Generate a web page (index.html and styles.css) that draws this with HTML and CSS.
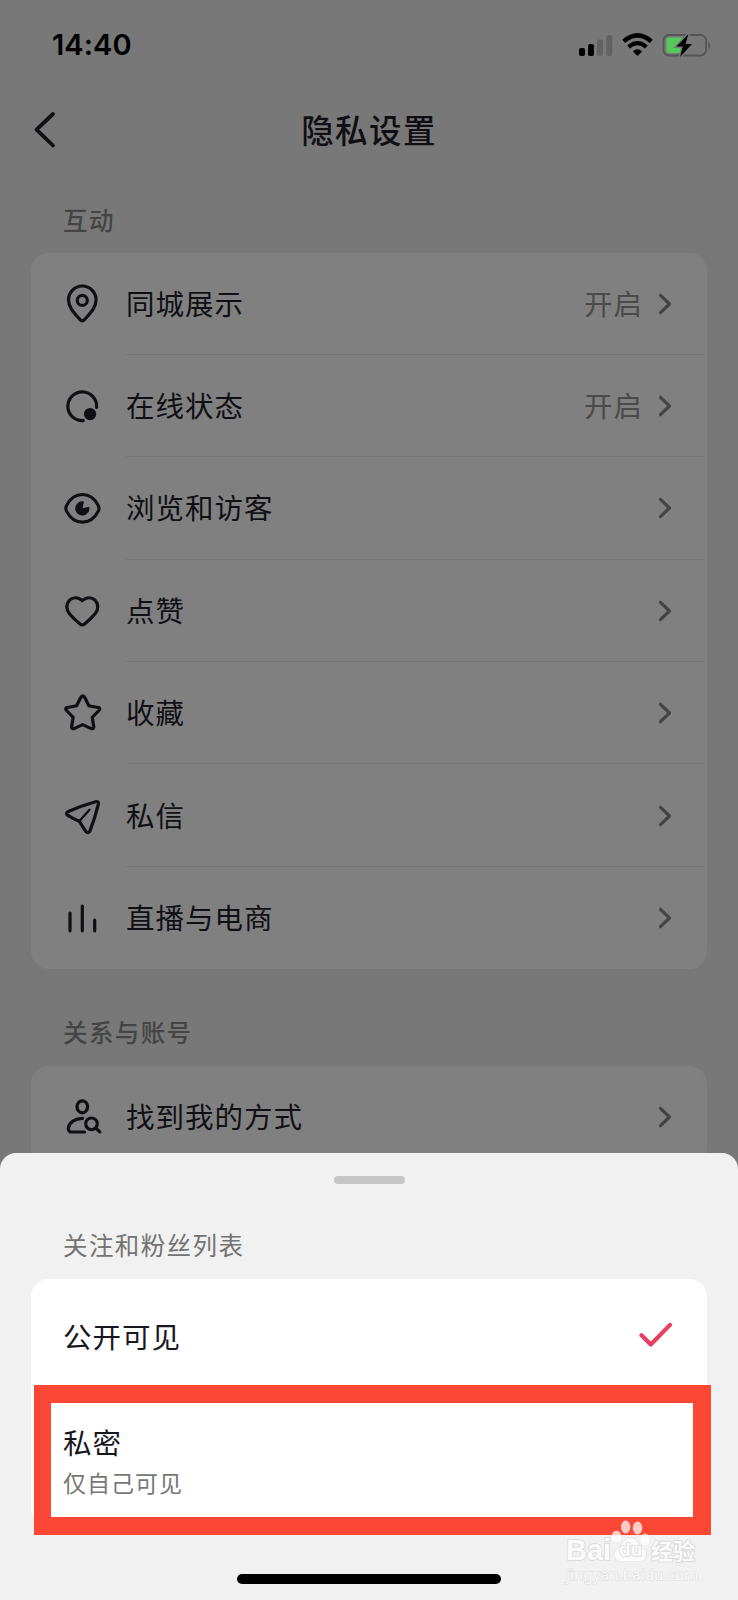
FILE: index.html
```html
<!DOCTYPE html>
<html lang="zh-CN">
<head>
<meta charset="utf-8">
<title>隐私设置</title>
<link rel="stylesheet" href="styles.css">
</head>
<body>
<div class="screen">
  <header class="status">
    <span class="time">14:40</span>
    <svg class="status-icons" width="132" height="26" viewBox="0 0 132 26">
      <rect x="0" y="15" width="6" height="8" rx="2"/>
      <rect x="9" y="11" width="6" height="12" rx="2"/>
      <rect x="18" y="6.500" width="6" height="16.500" rx="2" fill="#626262"/>
      <rect x="27.300" y="2" width="6" height="21" rx="2" fill="#626262"/>
      <path d="M44.700 8.300Q58.500-3.600 72.300 8.300" fill="none" stroke="#000" stroke-width="4.400"/>
      <path d="M49.600 14Q58.500 6.300 67.400 14" fill="none" stroke="#000" stroke-width="4"/>
      <path d="M54 18.400Q58.500 14.300 63 18.400L58.500 22.900Z"/>
      <rect x="84.500" y="2" width="42.500" height="20.500" rx="5.500" fill="none" stroke="#555" stroke-width="1.800"/>
      <path d="M129.300 8.500q4 4 0 8z" fill="#555"/>
      <rect x="87.500" y="4.500" width="16" height="15.500" rx="3" fill="#54c95c"/>
      <path d="M109.500 1L97.500 13.600h6.300L101 24l12-13h-6.500z" stroke="#787878" stroke-width="3" paint-order="stroke"/>
    </svg>
  </header>

  <nav class="navbar">
    <svg class="back" width="24" height="40" viewBox="0 0 24 40"><path d="M20 4L3.500 19.700 20 35.500"/></svg>
    <h1>隐私设置</h1>
  </nav>

  <h2 class="section-title first">互动</h2>
  <ul class="card">
    <li class="row">
      <svg class="icon" viewBox="0 0 40 40"><path d="M20.300 36.900c-1 0-1.700-.7-2.400-1.500C12.500 29.200 6.500 23.500 6.500 15.800a13.800 13.800 0 0 1 27.600 0c0 7.700-6 13.400-11.400 19.600-.7.800-1.400 1.500-2.400 1.500z"/><circle cx="20.300" cy="16.400" r="5"/></svg>
      <span class="label">同城展示</span><span class="value">开启</span>
      <svg class="chevron" viewBox="0 0 14 22"><path d="M2.500 2.300l9 8.700-9 8.700"/></svg>
    </li>
    <li class="row">
      <svg class="icon" viewBox="0 0 40 40"><path d="M34.600 21.300A14.400 14.400 0 1 0 21.300 34.600"/><circle class="solid" cx="28.100" cy="28.100" r="6.200"/></svg>
      <span class="label">在线状态</span><span class="value">开启</span>
      <svg class="chevron" viewBox="0 0 14 22"><path d="M2.500 2.300l9 8.700-9 8.700"/></svg>
    </li>
    <li class="row">
      <svg class="icon" viewBox="0 0 40 40"><path d="M4.500 17.600C8 10.700 14 6.500 20.400 6.500s12.400 4.200 15.900 11.100c.9 1.800.9 3.700 0 5.500-3.500 6.900-9.500 11.100-15.900 11.100S8 30 4.500 23.100c-.9-1.800-.9-3.700 0-5.500z"/><path class="solid" d="M27.200 18.700A7.100 7.100 0 1 1 22 13.500L20.700 19q-.2 1.200 1 1z"/></svg>
      <span class="label">浏览和访客</span>
      <svg class="chevron" viewBox="0 0 14 22"><path d="M2.500 2.300l9 8.700-9 8.700"/></svg>
    </li>
    <li class="row">
      <svg class="icon" viewBox="0 0 40 40"><path d="M20.300 9.700C16.500 5.800 10.800 5.900 7.600 9.200c-3.500 3.700-3.700 9.300-.3 13.200C10.300 26.100 14.200 29.700 18.100 33c1.700 1.400 2.800 1.400 4.500 0 3.900-3.300 7.700-6.900 10.700-10.600 3.400-3.900 3.200-9.500-.3-13.200-3.200-3.300-8.900-3.400-12.700.5z"/></svg>
      <span class="label">点赞</span>
      <svg class="chevron" viewBox="0 0 14 22"><path d="M2.500 2.300l9 8.700-9 8.700"/></svg>
    </li>
    <li class="row">
      <svg class="icon" viewBox="0 0 40 40"><path d="M19.200 3.900q1.700-2 3.300 0Q24.600 8 26.900 12.700q5 1.200 9.600 1.800 2 .8.900 2.500-3.500 3.700-7.100 7.300.6 5 1.500 9.600-.3 2.100-2.400 1.700-4.300-1.900-8.700-4-4.400 2.100-8.700 4-2.100.4-2.400-1.700.9-4.600 1.500-9.600Q7.500 20.700 4.200 17q-1.200-1.700.8-2.500 4.600-.6 9.600-1.800Q16.900 8 19.200 3.900z"/></svg>
      <span class="label">收藏</span>
      <svg class="chevron" viewBox="0 0 14 22"><path d="M2.500 2.300l9 8.700-9 8.700"/></svg>
    </li>
    <li class="row">
      <svg class="icon" viewBox="0 0 40 40"><path d="M5.800 15.800Q19 9.700 33.500 5.700q3.300-.9 2.900 2.300Q33 22 28 34.900q-2 3.300-4.300.4Q20.500 30.500 17.200 25.200 11 22.800 5.400 19.200q-1.900-1.700.4-3.400z"/><path d="M17.200 25.200L27.500 13.800" stroke-width="2.400"/></svg>
      <span class="label">私信</span>
      <svg class="chevron" viewBox="0 0 14 22"><path d="M2.500 2.300l9 8.700-9 8.700"/></svg>
    </li>
    <li class="row">
      <svg class="icon" viewBox="0 0 40 40"><path d="M8 15.200v17.600M20.300 8.200v24.600M32.700 22v10.800"/></svg>
      <span class="label">直播与电商</span>
      <svg class="chevron" viewBox="0 0 14 22"><path d="M2.500 2.300l9 8.700-9 8.700"/></svg>
    </li>
  </ul>

  <h2 class="section-title">关系与账号</h2>
  <ul class="card">
    <li class="row">
      <svg class="icon" viewBox="0 0 40 40"><ellipse cx="20.300" cy="9.800" rx="5.300" ry="6"/><path d="M20.500 21.400C13 21.600 7 25.300 6.400 31.300c-.2 2.400.8 3.700 3 3.700H22.500"/><circle cx="29.500" cy="26.800" r="5.800"/><path d="M33.800 31l4 3.800"/></svg>
      <span class="label">找到我的方式</span>
      <svg class="chevron" viewBox="0 0 14 22"><path d="M2.500 2.300l9 8.700-9 8.700"/></svg>
    </li>
  </ul>

  <section class="sheet">
    <div class="handle"></div>
    <h2 class="sheet-title">关注和粉丝列表</h2>
    <div class="options">
      <div class="option">
        <span class="label">公开可见</span>
        <svg class="check" width="34" height="26" viewBox="0 0 34 26"><path d="M2.500 13.300l9.300 9.200L31 2.900"/></svg>
      </div>
      <div class="option private">
        <span class="label">私密</span>
        <span class="hint">仅自己可见</span>
      </div>
    </div>
    <div class="home-bar"></div>
  </section>

  <div class="highlight"></div>

  <div class="watermark">
    <div class="brand">
      <span class="bai">Bai</span>
      <span class="paw">
        <svg width="40" height="44" viewBox="0 0 40 44">
          <g fill="#fff" fill-opacity=".72"><ellipse cx="6.500" cy="17.500" rx="4.800" ry="6"/><ellipse cx="15.700" cy="8" rx="4.700" ry="6.400"/><ellipse cx="27.500" cy="9" rx="4.800" ry="6.400"/><ellipse cx="35" cy="20.500" rx="4.700" ry="6"/></g>
          <path d="M20.300 18.500c5 0 6.500 4.500 9.500 7.500 3 3 6.500 5 6.500 9.500 0 4.500-3.500 7-7.500 7H12.300c-5 0-8-2.500-8-6.500s3.500-6.500 6.500-9.500c3-3.500 5-8 9.500-8z" fill="#fdfdfd" fill-opacity=".85" stroke="#d9d9d9"/>
        </svg>
        <span class="du">du</span>
      </span>
      <span class="jingyan">经验</span>
    </div>
    <div class="site">jingyan.baidu.com</div>
  </div>
</div>
</body>
</html>
```
FILE: styles.css
```css
* { box-sizing: border-box; }

body {
  margin: 0;
  font-family: "Liberation Sans", "Noto Sans CJK SC", sans-serif;
}

.screen {
  position: relative;
  width: 738px;
  height: 1600px;
  overflow: hidden;
  background: #787878;
  color: #101014;
}

h1, h2, ul { margin: 0; padding: 0; }

.status {
  display: flex;
  justify-content: space-between;
  align-items: center;
  height: 91px;
  padding: 0 27px 0 52px;
}

.time {
  margin-top: -2px;
  font: 600 29px/36px Inter, sans-serif;
  letter-spacing: .1px;
  color: #000;
}

.status-icons { margin-top: 1px; }

.navbar {
  display: flex;
  align-items: center;
  height: 78px;
  padding-left: 33px;
}

.back, .icon, .chevron, .check {
  flex: none;
  fill: none;
  stroke-linecap: round;
  stroke-linejoin: round;
}

.back { stroke: #101014; stroke-width: 3.800; }

.navbar h1 {
  flex: 1;
  margin: -2px 57px 0 0;
  font-family: "Noto Sans CJK SC", sans-serif;
  font-size: 32.500px;
  font-weight: 500;
  letter-spacing: 1.400px;
  line-height: 48px;
  text-align: center;
}

.section-title, .sheet-title {
  font-family: "Noto Sans CJK SC", sans-serif;
  font-size: 24.500px;
  font-weight: 500;
  letter-spacing: 1.400px;
  line-height: 36px;
  color: #444;
}

.section-title { padding: 45px 0 15.700px 63px; }
.section-title.first { padding-top: 33px; padding-bottom: 14.500px; }

.card {
  margin: 0 31px;
  border-radius: 18px;
  background: #808080;
  list-style: none;
}

.row {
  display: flex;
  align-items: center;
  height: 102.400px;
  padding: 0 35px 0 31px;
  background: linear-gradient(#767676, #767676) 95px 100% / 578px 1px no-repeat;
}

.row:last-child { background: none; }

.icon {
  width: 40px;
  height: 40px;
  margin-right: 24px;
  stroke: #101014;
  stroke-width: 3.200;
}

.icon .solid { fill: #101014; stroke: none; }

.label {
  flex: 1;
  font-family: "Noto Sans CJK SC", sans-serif;
  font-size: 28.500px;
  font-weight: 400;
  letter-spacing: 1px;
  line-height: 42px;
}

.row .label, .row .value { margin-top: -2px; }

.value {
  margin-right: 15px;
  font-family: "Noto Sans CJK SC", sans-serif;
  font-size: 28.500px;
  letter-spacing: 1px;
  line-height: 42px;
  color: #4a4a4a;
}

.chevron {
  width: 14px;
  height: 22px;
  stroke: #444;
  stroke-width: 3.200;
}

.sheet {
  position: absolute;
  left: 0;
  right: 0;
  bottom: 0;
  display: flex;
  flex-direction: column;
  height: 447px;
  padding: 23px 31px 16px;
  border-radius: 16px 16px 0 0;
  background: #f1f1f1;
}

.handle {
  align-self: center;
  width: 71px;
  height: 8px;
  border-radius: 4px;
  background: #c6c6c6;
}

.sheet-title {
  margin: 43px 0 16px 32px;
  font-weight: 400;
  color: #737373;
}

.options {
  height: 247px;
  border-radius: 18px;
  background: #fff;
}

.option {
  display: flex;
  align-items: center;
  height: 114px;
  padding: 0 34px 0 32px;
}

.option .label { color: #17171f; }

.check { margin-top: -2px; stroke: #e5405f; stroke-width: 4.200; }

.option.private {
  flex-direction: column;
  align-items: flex-start;
  height: 133px;
  padding-top: 28px;
}

.option.private .label { flex: none; }

.hint {
  font-family: "Noto Sans CJK SC", sans-serif;
  font-size: 23px;
  letter-spacing: 1px;
  line-height: 36px;
  margin-top: 1px;
  color: #777;
}

.home-bar {
  align-self: center;
  width: 264px;
  height: 10px;
  margin-top: auto;
  border-radius: 5px;
  background: #000;
}

.highlight {
  position: absolute;
  left: 34px;
  top: 1385px;
  width: 677px;
  height: 149.500px;
  border: 18px solid #fd4735;
  border-left-width: 17px;
}

.watermark {
  position: absolute;
  left: 566px;
  top: 1519px;
  width: 134px;
  color: #fafafa;
}

.brand {
  display: flex;
  align-items: flex-end;
  height: 46px;
  -webkit-text-stroke: 1.600px #d9d9d9;
  paint-order: stroke fill;
}

.bai {
  width: 44px;
  font: 700 29px/30px "Liberation Sans", sans-serif;
}

.paw {
  position: relative;
  width: 40px;
  height: 46px;
}

.du {
  position: absolute;
  left: 9px;
  top: 20px;
  font: 700 19px/22px "Liberation Sans", sans-serif;
}

.jingyan {
  font: 700 22px/32px "Noto Sans CJK SC", sans-serif;
  margin-left: 1px;
}

.site {
  font: 15.300px/18px "Noto Sans", sans-serif;
  -webkit-text-stroke: 1px #dadada;
  paint-order: stroke fill;
}
```
